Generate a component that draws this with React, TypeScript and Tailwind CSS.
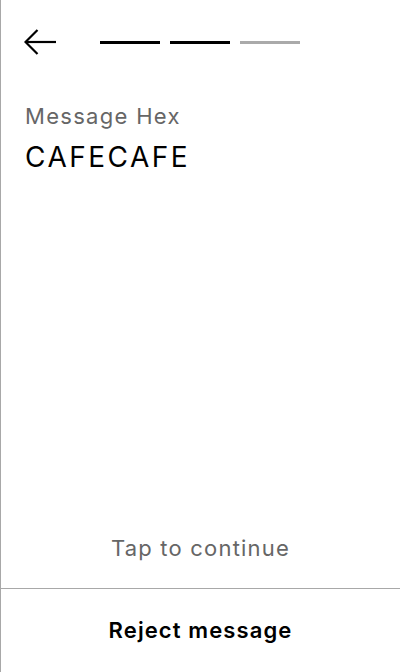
import React from 'react';

export default function App() {
  return (
    <div className="w-[400px] h-[672px] bg-white border-l border-[#a8a8a8] flex flex-col text-black" style={{ fontFamily: 'Inter, "Noto Sans", sans-serif' }}>
      {/* Header */}
      <div className="flex items-center h-[84px] pl-6 pt-0">
        <svg width="33" height="28" viewBox="0 0 33 28" fill="none" stroke="black" strokeWidth="2.2" className="-ml-px">
          <path d="M32 14H2" />
          <path d="M13.5 2L1.5 14L13.5 26" />
        </svg>
        <div className="flex gap-[10px] ml-[43px]">
          <div className="w-[60px] h-[3px] bg-black" />
          <div className="w-[60px] h-[3px] bg-black" />
          <div className="w-[60px] h-[3px] bg-[#aaaaaa]" />
        </div>
      </div>

      {/* Content */}
      <div className="flex-1 flex flex-col px-6 pt-[15px]">
        <div className="text-[22px] leading-[34px] tracking-[1.3px] text-[#666666]">Message Hex</div>
        <div className="text-[28px] leading-[40px] tracking-[2.5px] text-black mt-[4px]">CAFECAFE</div>
        <div className="flex-1" />
        <div className="text-center text-[22px] leading-[34px] tracking-[1.2px] text-[#666666] mb-[23px]">Tap to continue</div>
      </div>

      {/* Footer */}
      <div className="border-t border-[#a8a8a8] h-[84px] flex items-center justify-center">
        <span className="text-[22px] font-semibold tracking-[1.1px]">Reject message</span>
      </div>
    </div>
  );
}
